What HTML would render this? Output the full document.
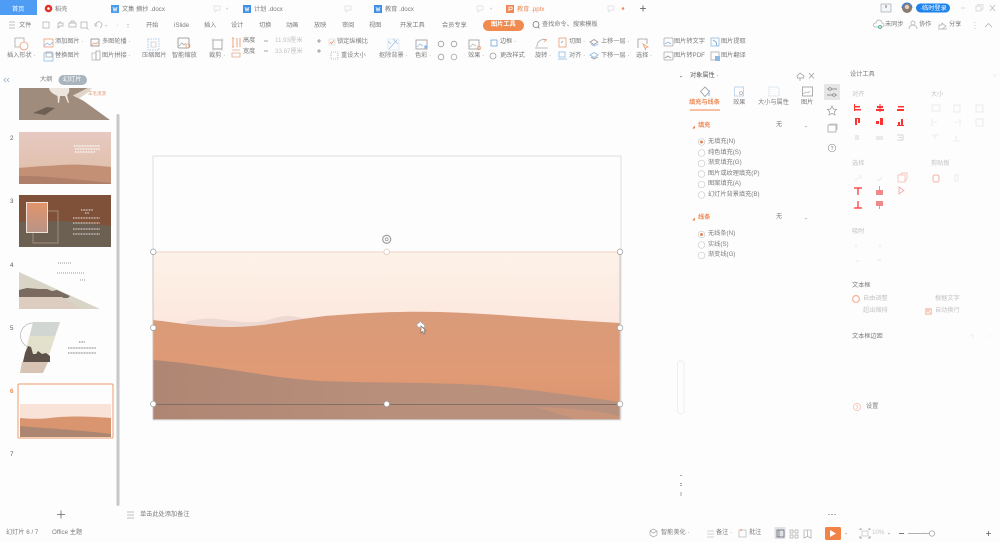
<!DOCTYPE html>
<html lang="zh"><head><meta charset="utf-8"><style>
html,body{margin:0;padding:0}
body{width:1000px;height:542px;overflow:hidden;background:#fdfdfd;position:relative;font-family:"Liberation Sans","Noto Sans CJK SC",sans-serif}
.l{position:absolute;white-space:nowrap;font-size:6.2px;line-height:10px;margin-top:1px;color:#7c7c7c;filter:blur(.3px)}
.o{color:#ee8a55}.d{color:#c4c4c4}.k{color:#5c5c5c}
svg{position:absolute;left:0;top:0}
</style></head><body>
<svg width="1000" height="542" viewBox="0 0 1000 542" fill="none">
<defs>
<filter id="b" x="0" y="0" width="1000" height="542" filterUnits="userSpaceOnUse"><feGaussianBlur stdDeviation=".35"/></filter>
<linearGradient id="sky" x1="0" y1="0" x2="0" y2="1"><stop offset="0" stop-color="#fdf2e8"/><stop offset=".5" stop-color="#fce6dc"/><stop offset="1" stop-color="#f3d9d4"/></linearGradient>
<linearGradient id="sand" x1="0" y1="0" x2="0" y2="1"><stop offset="0" stop-color="#d99b7a"/><stop offset=".6" stop-color="#e09a75"/><stop offset="1" stop-color="#d8946f"/></linearGradient>
<linearGradient id="shade" x1="0" y1="0" x2="1" y2="0"><stop offset="0" stop-color="#ae8673"/><stop offset=".5" stop-color="#b88f7b"/><stop offset="1" stop-color="#b8917e"/></linearGradient>
<linearGradient id="t2" x1="0" y1="0" x2="0" y2="1"><stop offset="0" stop-color="#e6c9c2"/><stop offset=".6" stop-color="#e2c2b0"/><stop offset="1" stop-color="#d8b49d"/></linearGradient>
<linearGradient id="t3" x1="0" y1="0" x2="0" y2="1"><stop offset="0" stop-color="#e2946a"/><stop offset="1" stop-color="#b99488"/></linearGradient>
</defs>
<g filter="url(#b)">
<!-- tabs -->
<rect x="0" y="0" width="37" height="15" fill="#4f9cf5"/>
<circle cx="48.500" cy="8.500" r="3.800" fill="#e2302a"/><circle cx="48.500" cy="8.500" r="1.300" fill="#fff"/>
<rect x="111" y="5" width="8" height="8" fill="#4a9bea"/><rect x="243" y="5" width="8" height="8" fill="#3f8fe6"/><rect x="374" y="5" width="8" height="8" fill="#3f8fe6"/>
<rect x="506" y="5" width="8" height="8" fill="#f08a5a"/>
<path d="M113 7l1 4 1-3 1 3 1-4M245 7l1 4 1-3 1 3 1-4M376 7l1 4 1-3 1 3 1-4" stroke="#fff" stroke-width=".7"/>
<path d="M509 11V7h2a1 1 0 010 2.500h-2" stroke="#fff" stroke-width=".8"/>
<path d="M214 6h6v4h-3l-2 2v-2h-1zM345 6h6v4h-3l-2 2v-2h-1zM477 6h6v4h-3l-2 2v-2h-1zM608 6h6v4h-3l-2 2v-2h-1z" stroke="#ddd" stroke-width=".7"/>
<path d="M226 8.500h2M227 7.500v2M490 8.500h2M491 7.500v2" stroke="#ccc" stroke-width=".7"/>
<circle cx="623" cy="8.500" r="1.300" fill="#f08a5a"/>
<path d="M640 8.500h6M643 5.500v6" stroke="#555" stroke-width=".8"/>
<rect x="881" y="4" width="10" height="8" stroke="#aaa" stroke-width=".7" fill="#f2f5fa"/><path d="M886 5v3" stroke="#777"/>
<circle cx="907" cy="8" r="5" fill="#8a7a70"/><circle cx="907" cy="7" r="2.200" fill="#e3d0c4"/><path d="M902 8a5 5 0 0110 0" stroke="#2a7fe0" stroke-width=".9"/>
<rect x="916" y="3.500" width="34" height="9" rx="4.500" fill="#1d83ea"/>
<path d="M961 8h4" stroke="#ccc" stroke-width=".8"/><rect x="976" y="6" width="5" height="5" stroke="#ccc" stroke-width=".7"/><path d="M978 6V4.500h5V9.500h-2" stroke="#ccc" stroke-width=".6"/><path d="M990 5l5 6M995 5l-5 6" stroke="#bbb" stroke-width=".7"/>
<!-- menu row -->
<path d="M9 22h6M9 25h6M9 28h6" stroke="#aaa" stroke-width=".7"/>
<g stroke="#aaa" stroke-width=".7"><rect x="43" y="22" width="6" height="6"/><path d="M58 23h5v3h-3l-2 2zM60 21v2"/><path d="M69 23h7v4h-7zM71 23v-2h3v2"/><rect x="81" y="22" width="6" height="6"/><path d="M87 28l1.500 1.500"/><path d="M96 25a3 3 0 114 2.500M95 23v3h2.500"/></g>
<path d="M105 25l1 1 1-1M117 25h1M127 24l1 1 1-1M127 27h2" stroke="#bbb" stroke-width=".6"/>
<rect x="483" y="20" width="41" height="11" rx="5.500" fill="#f08a4f"/>
<circle cx="536" cy="24.500" r="3" stroke="#777" stroke-width=".8"/><path d="M538 27l1.500 1.500" stroke="#777" stroke-width=".8"/>
<g stroke="#aaa" stroke-width=".7"><path d="M875 27h7a2 2 0 000-4 3 3 0 00-6 0 2 2 0 00-1 4z"/><circle cx="880" cy="27" r="1.500" stroke="#3a9"/><circle cx="913" cy="23" r="2"/><path d="M909 29a4 4 0 018 0"/><path d="M939 28v-3h3v-2l4 3.500-4 2.500M938 29h9"/></g>
<path d="M975 22v.8M975 25v.8M975 28v.8" stroke="#bbb"/><path d="M985 27l3.500-3.500L992 27" stroke="#aaa" stroke-width=".7"/>
<!-- ribbon icons -->
<g stroke-width=".8">
<rect x="15" y="38" width="9" height="9" stroke="#aaa"/><circle cx="24" cy="46" r="4" stroke="#ef9f78" fill="#fdfdfd"/>
<rect x="44" y="39" width="9" height="8" stroke="#ee9d77"/><path d="M44 46l3-3 3 2 3-3" stroke="#8fbce8"/>
<rect x="44" y="53" width="9" height="8" stroke="#8fb9e4"/><rect x="46" y="52" width="6" height="5" stroke="#aaa"/>
<rect x="91" y="39" width="8" height="7" stroke="#888"/><path d="M92 45l2-2 2 1 2-2" stroke="#ee9d77"/>
<rect x="92" y="53" width="4" height="7" stroke="#bbb"/><rect x="96" y="51" width="4" height="9" stroke="#aaa"/>
<rect x="148" y="39" width="11" height="11" stroke="#9cc0e6" stroke-dasharray="1.500 1"/><rect x="151" y="42" width="5" height="5" stroke="#ccc"/>
<rect x="178" y="38" width="11" height="10" rx="1" stroke="#888"/><path d="M179 46l3-3 2 2 2-2" stroke="#aaa"/><circle cx="188" cy="46" r="2" stroke="#ef9f78"/>
<rect x="213" y="40" width="9" height="9" stroke="#888"/><path d="M211 40h13M213 38v13M222 38v13" stroke="#bbb" stroke-width=".5"/>
<path d="M232 38h2M233 38v9M232 47h2M237 38v9M240 38v9" stroke="#ee8d5f"/><path d="M232 50h8M232 53h8v4h-8z" stroke="#e8a888"/>
<path d="M264 41h4M264 51h4M317 41h4M319 39v4M317 51h4M319 49v4" stroke="#888"/>
<rect x="329" y="39" width="6" height="6" rx="1" stroke="#ddd"/><path d="M330 42l1.500 1.500 2.500-3" stroke="#ee8d5f"/>
<rect x="331" y="52" width="7" height="7" stroke="#aaa" stroke-dasharray="1 1"/>
<path d="M389 49l8-9M393 39l5 5M388 41l3 3" stroke="#9cc0e6"/><rect x="388" y="39" width="11" height="11" stroke="#b6cfe8" stroke-width=".4"/>
<rect x="416" y="40" width="11" height="9" stroke="#999"/><path d="M417 47l3-3 3 2" stroke="#9cc0e6"/><circle cx="426" cy="47" r="1.800" fill="#8fb9e4" stroke="none"/>
<circle cx="441" cy="44" r="2.800" stroke="#999"/><circle cx="454" cy="44" r="2.800" stroke="#999"/><circle cx="441" cy="57" r="2.800" stroke="#999"/><circle cx="454" cy="57" r="2.800" stroke="#aaa"/>
<rect x="469" y="40" width="10" height="9" stroke="#999"/><path d="M470 47l3-3 3 2" stroke="#bbb"/><circle cx="479" cy="48" r="1.800" stroke="#ef9f78"/>
<rect x="491" y="40" width="6" height="6" stroke="#6fa3dc"/><circle cx="493" cy="56" r="3" stroke="#999"/>
<path d="M537 47a7 7 0 0110-7M535 48h13" stroke="#aaa"/><path d="M543 39l3 1-2 2" stroke="#ee9d77"/>
<rect x="559" y="38" width="7" height="9" stroke="#ee9d77"/><path d="M561 43l2-2" stroke="#999"/>
<rect x="559" y="52" width="6" height="5" stroke="#8fb9e4"/><path d="M558 59h9" stroke="#8fb9e4"/>
<path d="M590 42l4-2.500 4 2.500-4 2.500z" stroke="#999"/><path d="M591 44l3 2 4-2" stroke="#8fb9e4"/>
<path d="M590 55l4-2.500 4 2.500-4 2.500z" stroke="#8fb9e4"/><path d="M591 57l3 2 4-2" stroke="#999"/>
<path d="M638 48v-9h9v5" stroke="#999"/><path d="M643 44l5 3-2 .5-.5 2z" stroke="#ee9d77"/>
<rect x="664" y="38" width="9" height="8" rx="1" stroke="#aaa"/><path d="M665 44l3-2 3 2" stroke="#8fb9e4"/>
<rect x="664" y="52" width="9" height="8" rx="1" stroke="#aaa"/><path d="M665 58l3-2 3 2" stroke="#999"/>
<rect x="711" y="38" width="8" height="8" stroke="#8fb9e4"/><path d="M713 40l3 2 1 4" stroke="#6fa3dc"/>
<rect x="711" y="52" width="8" height="8" stroke="#aaa"/><rect x="715" y="56" width="5" height="5" fill="#8fb9e4" stroke="none"/>
</g>
<!-- slide panel -->
<path d="M6 78l-2 2 2 2M9 78l-2 2 2 2" stroke="#8aa6c2" stroke-width=".7"/>
<rect x="58.500" y="75" width="28.500" height="10" rx="5" fill="#a9b4bd"/>
<rect x="116.500" y="114" width="3" height="392" rx="1.500" fill="#c8c8c8"/>
<!-- thumb 1 -->
<path d="M19 88H88L73 95.500l10 5 27 19.500H19z" fill="#a08c7d"/>
<path d="M88 88L73 95.500l6 3 9-6 4-4.500z" fill="#e0d6cc"/>
<path d="M49 88h20c1 4-1 6-2 7l2 8h-1l-3-7-5 0-1 7h-1l-.5-7c-4-2-8-4-8.500-8z" fill="#ece6df"/><path d="M33 113l14-6 8 1-10 7z" fill="#6e5f55"/>
<!-- thumb 2 -->
<rect x="19" y="132" width="92" height="52" fill="url(#t2)"/>
<path d="M19 168c20-2 30-2 42-3 15-1 30 0 50 2v17H19z" fill="#c38f75"/><path d="M19 176c25 0 45 2 92 7v1H19z" fill="#b07f6b"/>
<path d="M74 146h26M75 149h25M75 152h20" stroke="#fff" stroke-width="1.200" stroke-dasharray="1 .6"/>
<!-- thumb 3 -->
<rect x="19" y="195" width="92" height="52" fill="#7f5137"/>
<path d="M19 222l45-1 47 5v21H19z" fill="#6c6153"/>
<rect x="33" y="211" width="25" height="32" stroke="#9f8b7c" stroke-width="1"/>
<rect x="26.500" y="202.500" width="21" height="30" fill="url(#t3)" stroke="#f0e2d8" stroke-width="1"/>
<path d="M81 210h12M85 213h4M73 218h27M73 223h27M73 229h27M73 234h27" stroke="#eee" stroke-width="1" stroke-dasharray="1 .6"/>
<!-- thumb 4 -->
<path d="M19 272L100 309H19z" fill="#d9d5c6"/>
<path d="M19 290l8-2 12 1 8 0 5 2 5-1 13 6-2 2H19z" fill="#7a6a5e"/>
<path d="M19 297h43l20 12H19z" fill="#dccdc0"/>
<path d="M58 263h13M57 273h27M80 280h5" stroke="#777" stroke-width=".7" stroke-dasharray="1 1"/>
<!-- thumb 5 -->
<path d="M33 323a12.500 12.500 0 000 25" stroke="#b5b5b5" stroke-width=".7"/>
<path d="M33 322h27l-17 51H20z" fill="#e3e0cc"/><path d="M33 322h27l-5 14-25 0z" fill="#d2d6d2"/>
<path d="M23 362l2-9 3-7 3 1 2 7 3 0 2-3 4 3 4-1 4 3 0 6z" fill="#5d5148"/><path d="M22 362l26 0-5 11H20z" fill="#d8c4b4"/>
<path d="M79 342h6M68 348h28M68 353h28" stroke="#777" stroke-width=".9" stroke-dasharray="1 .6"/>
<!-- thumb 6 -->
<rect x="18" y="384" width="95" height="54" rx="1" fill="#fdfdfd" stroke="#ef9a66" stroke-width="1"/>
<rect x="20" y="404" width="91" height="33" fill="#f9e3d9"/>
<path d="M20 418c12 1 20 1 30 0 15-2 35-2 61 0v19H20z" fill="#d9946f"/><path d="M20 426c20 2 50 3 91 8v3H20z" fill="#ad8672"/>
<!-- plus -->
<path d="M57 514.500h8M61 510.500v8" stroke="#666" stroke-width=".8"/>
<path d="M127 512h7M127 515h7M127 518h7" stroke="#aaa" stroke-width=".7"/>
</g>
<!-- slide -->
<rect x="153" y="156" width="468" height="264" fill="#fdfdfd" stroke="#e0e0e0" stroke-width="1"/>
<rect x="153" y="252" width="467" height="167" fill="url(#sky)"/>
<path d="M185 322c12-3 22-4 32-3s25 4 40 3c12-1 20-6 30-6 8 0 14 2 20 3l-30 10h-90z" fill="#eed8d2"/>
<path d="M153 320C180 323 200 327 232 327C262 327 290 320 325 316C360 313 400 311 440 312C500 314 560 320 620 323V419H153z" fill="url(#sand)"/>
<path d="M153 360C180 362 205 366 240 371C270 376 290 379 320 381C370 383 420 382 480 385C520 388 570 395 620 402V419H153z" fill="url(#shade)"/>
<path d="M535 407C570 408 600 411 620 416V419H575C560 414 545 410 535 407z" fill="#c8957a"/>
<path d="M153 252h467" stroke="#ecc6b6" stroke-width=".8"/>
<path d="M153 252v167M620 252v167M153 419.500h467" stroke="#c9c2bd" stroke-width=".9"/>
<path d="M153 404.500h467" stroke="#6f6762" stroke-width=".8"/>
<g fill="#fff" stroke="#9a9a9a" stroke-width=".7">
<circle cx="153.300" cy="251.800" r="2.800"/><circle cx="386.700" cy="251.800" r="2.800" stroke="#d8c5bc"/><circle cx="620" cy="251.800" r="2.800"/>
<circle cx="153.300" cy="327.800" r="2.800"/><circle cx="620" cy="327.800" r="2.800"/>
<circle cx="153.300" cy="404" r="2.800"/><circle cx="386.700" cy="404" r="2.800"/><circle cx="620" cy="404" r="2.800"/></g>
<circle cx="386.700" cy="239.300" r="4" fill="#fff" stroke="#a5a5a5" stroke-width="1.300"/><circle cx="386.700" cy="239.300" r="1.500" stroke="#999" stroke-width=".8"/>
<path d="M420 321l1.800 2 2.200 1.500 1 2.500-3 1-4-1-1.500-2.500 2.500-1.500z" fill="#fff" stroke="#aaa" stroke-width=".7"/>
<path d="M421 326v7l1.500-1.500 1.500 2.500 1-.5-1.200-2.500 2-.5z" fill="#fff" stroke="#666" stroke-width=".6"/>
<g filter="url(#b)">
<!-- object panel -->
<path d="M680 76l1 1 1-1" stroke="#888" stroke-width=".7"/>
<path d="M800 73l-3 3 .5 2h6l.5-2zM800 78v3M809 73l5 5.500M814 73l-5 5.500" stroke="#999" stroke-width=".7"/>
<path d="M705 87l-4.500 4.500 4.500 5 4.500-5z" stroke="#999" stroke-width=".8"/><path d="M709 90v6" stroke="#8fb9e4"/>
<rect x="734.500" y="87" width="9" height="9" stroke="#b6cfe8" stroke-width=".8"/><circle cx="741" cy="93" r="1.500" stroke="#999" stroke-width=".6"/>
<rect x="769" y="87" width="10" height="9" stroke="#b6cfe8" stroke-width=".8" stroke-dasharray="1.200 1"/>
<rect x="802.500" y="87" width="10" height="9" stroke="#999" stroke-width=".8"/><path d="M803 94l3-2 2 1 2-2" stroke="#aaa" stroke-width=".6"/>
<path d="M690 110h30" stroke="#ef8450" stroke-width="1"/>
<path d="M692 128.500l3-3v3zM692 220.500l3-3v3z" fill="#ef8450"/>
<path d="M805 126l1 1 1-1M805 218l1 1 1-1" stroke="#aaa" stroke-width=".6"/>
<g fill="#fff" stroke="#ccc" stroke-width=".7">
<circle cx="701.500" cy="142" r="3.300"/><circle cx="701.500" cy="153" r="3.300"/><circle cx="701.500" cy="163.500" r="3.300"/><circle cx="701.500" cy="174" r="3.300"/><circle cx="701.500" cy="184.500" r="3.300"/><circle cx="701.500" cy="195" r="3.300"/>
<circle cx="701.500" cy="234.500" r="3.300"/><circle cx="701.500" cy="245" r="3.300"/><circle cx="701.500" cy="255.500" r="3.300"/></g>
<circle cx="701.500" cy="142" r="1.500" fill="#e2835a"/><circle cx="701.500" cy="234.500" r="1.500" fill="#e2835a"/>
<rect x="824" y="84" width="16" height="16" rx="1" fill="#e6e6e6"/>
<path d="M827 89h10M827 95h10" stroke="#777" stroke-width=".8"/><circle cx="830" cy="89" r="1.300" fill="#eee" stroke="#777" stroke-width=".6"/><circle cx="834" cy="95" r="1.300" fill="#eee" stroke="#777" stroke-width=".6"/>
<path d="M832 106l1.400 3 3.300.4-2.400 2.200.7 3.400-3-1.700-3 1.700.7-3.400-2.400-2.200 3.300-.4z" stroke="#999" stroke-width=".7"/>
<rect x="828" y="125" width="8" height="7" stroke="#999" stroke-width=".7"/><path d="M830 125v-1h7v6" stroke="#999" stroke-width=".6"/>
<circle cx="832" cy="148" r="3.800" stroke="#999" stroke-width=".7"/><path d="M831 147a1 1 0 112 .5l-1 1v1" stroke="#999" stroke-width=".6"/>
<rect x="677.500" y="361" width="6.500" height="53" rx="3.200" fill="#fdfdfd" stroke="#e8e8e8" stroke-width=".7"/>
<path d="M680 475.500h2M680 483.500h2M680 485.500h2M680 493h2M680 495h2" stroke="#888" stroke-width=".8"/>
<!-- design tools -->
<g fill="#ff3030">
<rect x="855" y="106" width="5" height="1.500"/><rect x="855" y="109" width="6" height="1.500"/><rect x="854" y="104" width="1" height="7"/>
<rect x="877" y="106" width="6" height="2"/><rect x="876" y="109" width="8" height="2"/><rect x="879.500" y="104" width="1" height="8"/>
<rect x="898" y="106" width="6" height="1.500"/><rect x="897" y="109" width="7" height="2"/>
<rect x="855" y="118" width="5" height="1"/><rect x="855" y="119" width="2" height="6"/><rect x="858" y="119" width="2" height="4"/>
<rect x="876" y="121" width="3" height="3"/><rect x="880" y="118" width="3" height="7"/>
<rect x="898" y="122" width="2" height="3"/><rect x="901" y="119" width="2" height="6"/><rect x="897" y="125" width="7" height="1"/>
</g>
<path d="M856 135v5M858 135v5M876 137h7M876 139h7M897 135h6v5h-6M899 137.500h3" stroke="#ccc" stroke-width=".8"/>
<g stroke="#e8e8e8" stroke-width=".8"><rect x="932" y="105" width="8" height="6"/><rect x="954" y="105" width="6" height="7"/><rect x="976" y="105" width="7" height="7"/><path d="M932 119v7M934 122h3M960 119v7M955 122h3"/><rect x="976" y="119" width="7" height="7"/><path d="M932 135h7M935 135v4M953 141h7M956 136v4"/></g>
<g stroke-width=".7"><path d="M855 181l3-3M860 175a1.500 1.500 0 102 2" stroke="#e5e5e5"/><path d="M877 179l2 2 3-4" stroke="#e5e5e5"/>
<rect x="898" y="175" width="7" height="7" stroke="#f3b6a8"/><path d="M900 175l2-2h5v6l-2 2" stroke="#f3b6a8"/>
<rect x="933" y="175" width="6" height="7" rx="2" stroke="#f6bdb0" stroke-width="1.200"/><rect x="955" y="175" width="3" height="6" stroke="#e5e5e5"/></g>
<path d="M854 188h8M858 188v7" stroke="#ff3030" stroke-width="1.200"/><rect x="876" y="190" width="7" height="5" fill="#f0898a"/><path d="M879.500 186v4" stroke="#f0898a"/>
<path d="M899 187v7l5-3.500z" stroke="#f1a2a0" stroke-width=".8"/>
<path d="M854 208h8M858 201v7" stroke="#ff3030" stroke-width="1.200"/><rect x="876" y="201" width="7" height="5" fill="#f0898a"/><path d="M879.500 206v3" stroke="#f0898a"/>
<path d="M856 244v3M880 244v3M856 261h3M877 260h2M880 258v3" stroke="#e8e8e8" stroke-width=".9"/>
<circle cx="856" cy="299" r="3.400" fill="#fff" stroke="#f6bba5" stroke-width="1.400"/>
<rect x="925" y="308" width="7" height="7" rx="1" fill="#f8cdbb"/><path d="M926.500 312l1.500 1.500 3-3" stroke="#fff" stroke-width=".8"/>
<circle cx="857" cy="407" r="3.500" stroke="#f4b8a3" stroke-width=".7"/><path d="M856 405l2 2-2 2" stroke="#f4b8a3" stroke-width=".6"/>
<path d="M970 335h3v3M990 335l-.5 2" stroke="#e8e8e8" stroke-width=".7"/>
<path d="M993 74l3 3M996 74l-3 3" stroke="#eee" stroke-width=".6"/>
<!-- status bar -->
<path d="M828.500 514.500h1M831.500 514.500h1M834.500 514.500h1" stroke="#666" stroke-width="1"/>
<path d="M650 531l3.500-2 3.500 2v4l-3.500 2-3.500-2zM650 531l3.500 2 3.500-2" stroke="#999" stroke-width=".6"/>
<path d="M707 531h7M707 534h7M707 537h7" stroke="#aaa" stroke-width=".6"/><rect x="739" y="530" width="7" height="7" stroke="#aaa" stroke-width=".6"/><circle cx="741" cy="530" r=".9" fill="#ee8d5f"/>
<rect x="774.500" y="527" width="11" height="12" rx="1" fill="#dfe3e6"/><rect x="777" y="530" width="7" height="7" stroke="#667" stroke-width=".8"/><path d="M779 530v7" stroke="#667" stroke-width=".7"/>
<g stroke="#999" stroke-width=".6"><rect x="790" y="530" width="3" height="3"/><rect x="795" y="530" width="3" height="3"/><rect x="790" y="535" width="3" height="3"/><rect x="795" y="535" width="3" height="3"/><path d="M804 530h7v8l-3.500-1.500L804 538zM807.500 530v6"/></g>
<rect x="825" y="527" width="16" height="13" rx="1.500" fill="#f08344"/><path d="M830 530l6 3.500-6 3.500z" fill="#fff"/>
<path d="M845 533l1 1 1-1M888 533l1 1 1-1M923 533h1" stroke="#aaa" stroke-width=".6"/>
<path d="M860 530v-1h2M868 529h2v1M860 536v2h2M868 538h2v-2" stroke="#888" stroke-width=".7"/><rect x="862" y="531" width="6" height="5" stroke="#aaa" stroke-width=".5"/>
<path d="M899 533.500h5" stroke="#777"/><path d="M908 533.500h23" stroke="#999" stroke-width=".7"/><circle cx="932" cy="533.500" r="2.700" fill="#fff" stroke="#888" stroke-width=".6"/>
<path d="M986 533.500h5M988.500 531v5" stroke="#666" stroke-width=".8"/>
</g>
</svg>
<span class="l" style="left:12px;top:4px;color:#fff">首页</span><span class="l" style="left:55px;top:4px">稻壳</span>
<span class="l" style="left:122px;top:4px">文集 摘抄 .docx</span><span class="l" style="left:254px;top:4px">计划 .docx</span><span class="l" style="left:385px;top:4px">教育 .docx</span><span class="l o" style="left:517px;top:4px">教育 .pptx</span>
<span class="l" style="left:920px;top:3px;color:#fff">·临时登录</span>
<span class="l" style="left:19px;top:20px">文件</span><span class="l" style="left:146px;top:20px">开始</span><span class="l" style="left:174px;top:20px">iSlide</span><span class="l" style="left:204px;top:20px">插入</span><span class="l" style="left:231px;top:20px">设计</span><span class="l" style="left:259px;top:20px">切换</span><span class="l" style="left:286px;top:20px">动画</span><span class="l" style="left:314px;top:20px">放映</span><span class="l" style="left:342px;top:20px">审阅</span><span class="l" style="left:369px;top:20px">视图</span><span class="l" style="left:400px;top:20px">开发工具</span><span class="l" style="left:442px;top:20px">会员专享</span>
<span class="l" style="left:491px;top:19px;color:#fff;font-weight:bold">图片工具</span><span class="l" style="left:542px;top:19px">查找命令、搜索模板</span>
<span class="l" style="left:885px;top:19px">未同步</span><span class="l" style="left:919px;top:19px">协作</span><span class="l" style="left:949px;top:19px">分享</span>
<span class="l" style="left:7px;top:50px">插入形状 ·</span><span class="l" style="left:55px;top:36px">添加图片 ·</span><span class="l" style="left:55px;top:50px">替换图片</span><span class="l" style="left:102px;top:36px">多图轮播 ·</span><span class="l" style="left:102px;top:50px">图片拼接 ·</span><span class="l" style="left:142px;top:50px">压缩图片</span><span class="l" style="left:172px;top:50px">智能缩放</span><span class="l" style="left:209px;top:50px">裁剪 ·</span>
<span class="l" style="left:243px;top:35px">高度</span><span class="l" style="left:243px;top:46px">宽度</span><span class="l d" style="left:275px;top:35px">11.93厘米</span><span class="l d" style="left:275px;top:46px">33.87厘米</span>
<span class="l" style="left:337px;top:36px">锁定纵横比</span><span class="l" style="left:341px;top:50px">重设大小</span><span class="l" style="left:379px;top:50px">抠除背景 ·</span><span class="l" style="left:415px;top:50px">色彩 ·</span><span class="l" style="left:468px;top:50px">效果 ·</span><span class="l" style="left:500px;top:36px">边框 ·</span><span class="l" style="left:500px;top:50px">更改样式</span>
<span class="l" style="left:535px;top:50px">旋转 ·</span><span class="l" style="left:569px;top:36px">切图 ·</span><span class="l" style="left:569px;top:50px">对齐 ·</span><span class="l" style="left:601px;top:36px">上移一层 ·</span><span class="l" style="left:601px;top:50px">下移一层 ·</span><span class="l" style="left:636px;top:50px">选择 ·</span>
<span class="l" style="left:674px;top:36px">图片转文字</span><span class="l" style="left:674px;top:50px">图片转PDF</span><span class="l" style="left:721px;top:36px">图片提取</span><span class="l" style="left:721px;top:50px">图片翻译</span>
<span class="l" style="left:40px;top:74px">大纲</span><span class="l" style="left:63px;top:74px;color:#fff">幻灯片</span><span class="l" style="left:88px;top:88px;color:#e09a78;font-size:4.500px">羊毛漠漠</span>
<span class="l k" style="left:10px;top:133px">2</span><span class="l k" style="left:10px;top:196px">3</span><span class="l k" style="left:10px;top:260px">4</span><span class="l k" style="left:10px;top:323px">5</span><span class="l o" style="left:10px;top:386px;font-weight:bold">6</span><span class="l k" style="left:10px;top:449px">7</span>
<span class="l" style="left:140px;top:509px">单击此处添加备注</span><span class="l" style="left:6px;top:527px">幻灯片 6 / 7</span><span class="l" style="left:52px;top:527px">Office 主题</span>
<span class="l k" style="left:690px;top:70px">对象属性 ·</span><span class="l o" style="left:689px;top:97px;font-weight:bold">填充与线条</span><span class="l" style="left:733px;top:97px">效果</span><span class="l" style="left:758px;top:97px">大小与属性</span><span class="l" style="left:801px;top:97px">图片</span>
<span class="l o" style="left:698px;top:120px;font-weight:bold">填充</span><span class="l" style="left:776px;top:119px">无</span>
<span class="l" style="left:708px;top:136px">无填充(N)</span><span class="l" style="left:708px;top:147px">纯色填充(S)</span><span class="l" style="left:708px;top:157px">渐变填充(G)</span><span class="l" style="left:708px;top:168px">图片或纹理填充(P)</span><span class="l" style="left:708px;top:178px">图案填充(A)</span><span class="l" style="left:708px;top:189px">幻灯片背景填充(B)</span>
<span class="l o" style="left:698px;top:212px;font-weight:bold">线条</span><span class="l" style="left:776px;top:211px">无</span>
<span class="l" style="left:708px;top:228px">无线条(N)</span><span class="l" style="left:708px;top:239px">实线(S)</span><span class="l" style="left:708px;top:249px">渐变线(G)</span>
<span class="l" style="left:850px;top:69px">设计工具</span><span class="l d" style="left:852px;top:89px">对齐</span><span class="l d" style="left:931px;top:89px">大小</span><span class="l d" style="left:852px;top:158px">选择</span><span class="l d" style="left:931px;top:158px">剪贴板</span><span class="l d" style="left:852px;top:226px">吸附</span><span class="l" style="left:852px;top:280px">文本框</span>
<span class="l d" style="left:863px;top:293px">自由调整</span><span class="l d" style="left:935px;top:293px">根据文字</span><span class="l d" style="left:863px;top:305px">超出缩排</span><span class="l d" style="left:935px;top:305px">自动换行</span>
<span class="l" style="left:852px;top:331px">文本框边距</span><span class="l" style="left:866px;top:401px">设置</span>
<span class="l" style="left:661px;top:527px">智能美化 ·</span><span class="l" style="left:716px;top:527px">备注 ·</span><span class="l" style="left:749px;top:527px">批注</span><span class="l d" style="left:872px;top:527px">10%</span>
</body></html>
